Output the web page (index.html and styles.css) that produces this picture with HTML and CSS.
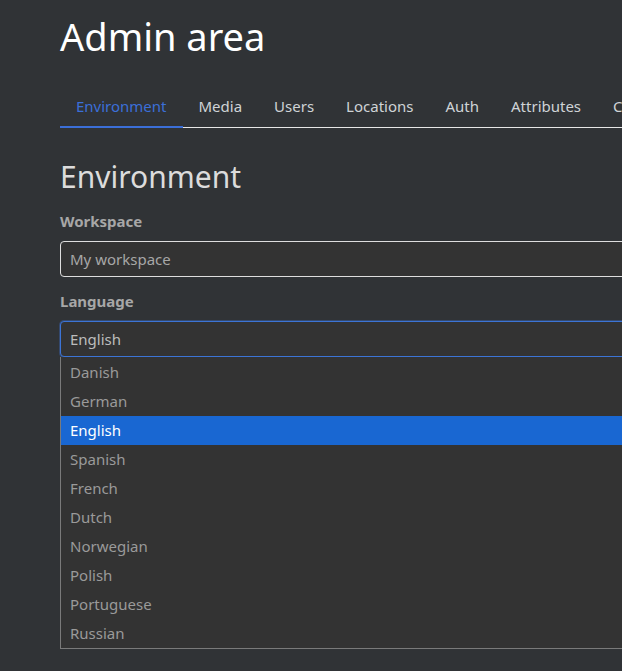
FILE: index.html
```html
<!DOCTYPE html>
<html lang="en">
<head>
  <meta charset="UTF-8" />
  <meta name="viewport" content="width=device-width, initial-scale=1.0"/>
  <title>Admin area</title>
  <link rel="stylesheet" href="styles.css">
</head>
<body>
  <div class="container">
    <h1>Admin area</h1>
    <ul class="tabs">
      <li class="active">Environment</li>
      <li>Media</li>
      <li>Users</li>
      <li>Locations</li>
      <li>Auth</li>
      <li>Attributes</li>
      <li>Categories</li>
    </ul>

    <h2>Environment</h2>
    <label>Workspace</label>
    <div class="field">My workspace</div>
    <label>Language</label>
    <div class="field focus">English</div>
    <ul class="dropdown">
      <li>Danish</li>
      <li>German</li>
      <li class="selected">English</li>
      <li>Spanish</li>
      <li>French</li>
      <li>Dutch</li>
      <li>Norwegian</li>
      <li>Polish</li>
      <li>Portuguese</li>
      <li>Russian</li>
    </ul>
  </div>
</body>
</html>
```

FILE: styles.css
```css
:root {
  --bg: #303336;
  --panel: #333333;
  --text: #dedede;
  --muted: #a7a7a7;
  --accent: #3b6fd8;
  --select: #1967d2;
}
body {
  margin: 0;
  font-family: 'Noto Sans', sans-serif;
  background: var(--bg);
  color: var(--text);
  overflow: hidden;
}
.container {
  width: 720px;
  padding-left: 60px;
}
h1 {
  margin: 0;
  padding-top: 10px;
  font-size: 38px;
  font-weight: 400;
  line-height: 52px;
  color: #fff;
}
.tabs {
  list-style: none;
  margin: 24px 0 0;
  padding: 0;
  display: flex;
  border-bottom: 1px solid #e6e6e6;
  white-space: nowrap;
}
.tabs li {
  padding: 8px 16px;
  font-size: 15px;
  line-height: 24px;
  color: #cfd3d6;
  margin-bottom: -1px;
  border-bottom: 2px solid transparent;
}
.tabs li.active {
  color: var(--accent);
  border-bottom-color: var(--accent);
}
h2 {
  margin: 29px 0 0;
  font-size: 30px;
  font-weight: 400;
  line-height: 40px;
  color: #dcdcdc;
}
label {
  display: block;
  margin-top: 13px;
  margin-bottom: 9px;
  font-size: 15px;
  font-weight: 700;
  line-height: 22px;
  color: var(--muted);
}
.field {
  height: 34px;
  border: 1px solid #dedede;
  border-radius: 4px;
  background: var(--panel);
  padding: 0 9px;
  font-size: 15px;
  line-height: 34px;
  color: var(--muted);
}
.field.focus {
  border-color: #3c74d6;
  box-shadow: 0 0 0 1px rgba(60,116,214,0.35);
  color: #bcbcbc;
}
.dropdown {
  list-style: none;
  margin: 0;
  padding: 1px 0 0;
  background: var(--panel);
  border: 1px solid #7a7a7a;
  border-top: none;
}
.dropdown li {
  height: 29px;
  padding-left: 9px;
  font-size: 15px;
  line-height: 29px;
  color: #9a9a9a;
}
.dropdown li.selected {
  background: var(--select);
  color: #fff;
}
```
